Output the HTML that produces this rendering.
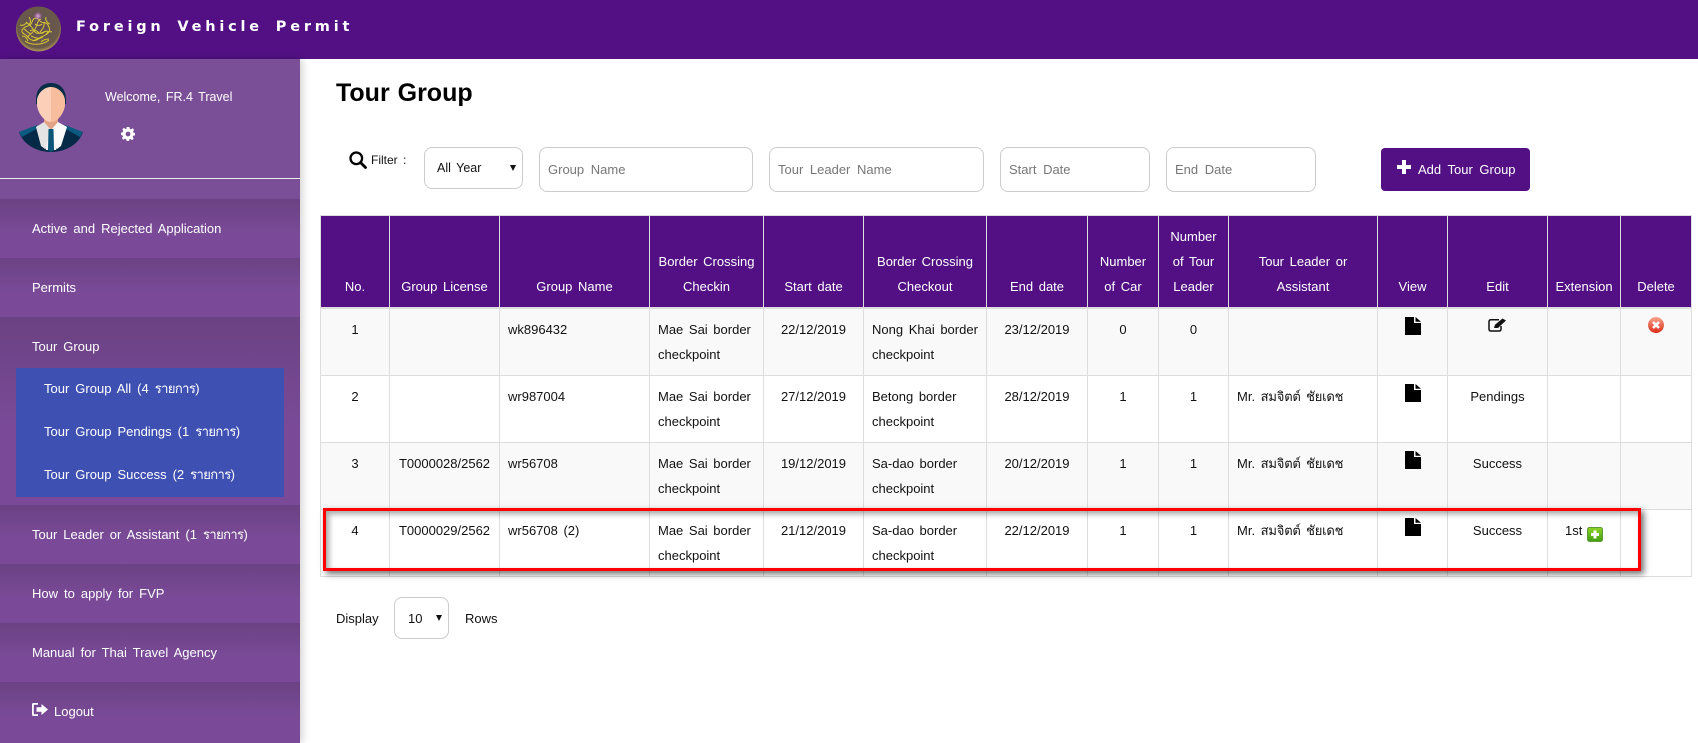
<!DOCTYPE html>
<html><head><meta charset="utf-8"><title>Foreign Vehicle Permit</title>
<style>
*{box-sizing:border-box}
html,body{margin:0;padding:0;width:1698px;height:743px;overflow:hidden;background:#fff}
body{font-family:"Liberation Sans","Noto Sans CJK SC",sans-serif;font-size:13px;word-spacing:3px;color:#111;position:relative}
.abs{position:absolute;white-space:nowrap}
.t{letter-spacing:-.6px;word-spacing:0}
.n{letter-spacing:-.2px;word-spacing:2px}
#top{position:absolute;left:0;top:0;width:1698px;height:59px;background:#521084}
#title{left:76px;top:17px;font-family:"DejaVu Sans",sans-serif;font-size:14.500px;font-weight:bold;color:#fff;letter-spacing:3.800px;line-height:20px;word-spacing:4px}
#side{position:absolute;left:0;top:59px;width:300px;height:684px;background:#7b4f98;box-shadow:2px 0 8px rgba(0,0,0,.2)}
#hr{position:absolute;left:0;top:178px;width:300px;height:1px;background:#eee}
.mi{position:absolute;left:0;width:300px;height:59px;background:linear-gradient(#6b4283,#7a4a98 60%);color:#fff;padding-left:32px;line-height:59px;font-size:13px;word-spacing:2.400px}
#sub{position:absolute;left:16px;top:368px;width:268px;height:129px;background:#3f50b3}
.si{position:absolute;left:44px;color:#fff;line-height:20px;white-space:nowrap;word-spacing:2.400px}
h1{position:absolute;left:336px;top:76px;margin:0;font-size:25px;line-height:34px;font-weight:bold;color:#000;word-spacing:1px}
.box{position:absolute;border:1px solid #ccc;border-radius:8px;background:#fff;color:#777;padding-left:8px;display:flex;align-items:center;font-size:13px}
.arr{position:absolute;width:0;height:0;border-left:3.500px solid transparent;border-right:3.500px solid transparent;border-top:6px solid #111}
#btn{position:absolute;left:1381px;top:148px;width:149px;height:43px;background:#521084;border-radius:4px;color:#fff}
table{position:absolute;left:320px;top:215px;width:1371px;height:362px;border-collapse:collapse;table-layout:fixed;word-spacing:2px}
th{background:#521084;color:#fff;font-weight:normal;border:1px solid #ddd;border-bottom:2px solid #ddd;vertical-align:bottom;padding:0 2px 8px;line-height:25px;height:92px;text-align:center;font-size:13px;white-space:nowrap}
td{border:1px solid #ddd;vertical-align:top;padding:8px;line-height:25px;height:67px;color:#111;white-space:nowrap}
td.c{text-align:center;padding-left:2px;padding-right:2px}
tr.s td{background:#f9f9f9}
#red{position:absolute;left:323px;top:508px;width:1318px;height:63px;border:3px solid #f00;box-shadow:3px 3px 6px rgba(0,0,0,.55),inset 3px 3px 6px rgba(0,0,0,.35)}
svg{position:absolute;overflow:visible}
</style></head><body>
<div id="top"></div>
<svg style="left:0;top:0" width="70" height="59" viewBox="0 0 70 59">
<defs><radialGradient id="sg" cx=".5" cy=".45" r=".55"><stop offset="0" stop-color="#5e4c58"/><stop offset=".85" stop-color="#6b5a48"/><stop offset="1" stop-color="#b39c58"/></radialGradient>
<radialGradient id="gl" cx=".5" cy=".5" r=".5"><stop offset="0" stop-color="#f0b4f0"/><stop offset="1" stop-color="#8a4a9c" stop-opacity="0"/></radialGradient></defs>
<circle cx="38.500" cy="29" r="22.500" fill="url(#sg)"/>
<g fill="none" stroke="#d9c832" stroke-width="1">
<path d="M22 30c4-6 8-2 10-8s6-4 8-1 6 0 8 4 3 6-1 9-6 2-9 5-8 1-10-2-7-3-6-7z"/>
<path d="M26 22c3 3 5 3 7 7s4 5 8 4 6-3 8-1M27 37c4-3 7-5 9-10s2-7 5-8M33 41c3-2 7-2 10-4M24 29c2 1 4 4 7 5M44 22c1 4-1 7-4 10"/>
<path d="M25 41c5 4 17 5 24-1M20 25c3 1 5 0 7-3M29 17c2 3 2 5 0 8M46 17c-1 3 1 6 4 7M52 32c-3-1-5 0-6 3M22 36c3 0 5 2 6 5M30 31c3-2 6-1 8 1s5 2 7-1M35 24c2 2 5 2 7 0M31 36c3 1 5 3 9 2M41 42c2-2 5-3 8-3"/>
</g>
<circle cx="38" cy="16" r="5" fill="url(#gl)"/>
</svg>
<div class="abs" id="title">Foreign Vehicle Permit</div>

<div id="side"></div>
<svg style="left:0;top:0" width="100" height="160" viewBox="0 0 100 160">
<path d="M19 132L40 126H62L83 132C79 144 66 152 51 152S23 144 19 132Z" fill="#042a47"/>
<path d="M19 132L37 125 38 128 22 137Z" fill="#0d5a80"/><path d="M83 132L65 125 64 128 80 137Z" fill="#0d5a80"/>
<path d="M37 126H66L56 150H46Z" fill="#f4f4f4"/>
<path d="M44 118H58V126L51 132 44 126Z" fill="#e2a386"/>
<path d="M36 127L44 122 51 130 45 149 41 146Z" fill="#e4e4e4"/><path d="M67 127L58 122 51 130 57 149 61 146Z" fill="#fafafa"/>
<path d="M48.500 129H53.500L54 150 51 152 48 150Z" fill="#0b5578"/>
<path d="M36 100C36 88 43 83 51 83S66 88 66 100V104H36Z" fill="#0a2d47"/>
<path d="M37 100C38 92 45 87 51 87V122C44 122 37 112 37 104Z" fill="#fcd0b8"/>
<path d="M65 100C64 92 57 87 51 87V122C58 122 65 112 65 104Z" fill="#f8bd9c"/>
</svg>
<div class="abs" style="left:105px;top:87px;color:#fff;line-height:20px;font-size:12.500px;word-spacing:2px">Welcome, FR.4 Travel</div>
<svg style="left:121px;top:127px" width="14" height="14" viewBox="0 0 14 14"><path fill="#fff" fill-rule="evenodd" d="M5.600 0H8.400L8.800 1.900 10 2.400 11.600 1.300 13.100 2.900 12 4.500 12.500 5.700 14 6V8.400L12.200 8.800 11.700 10 12.700 11.600 11.100 13.100 9.500 12 8.300 12.500 8 14H5.600L5.200 12.200 4 11.700 2.400 12.700 .9 11.100 2 9.500 1.500 8.300 0 8V5.600L1.800 5.200 2.300 4 1.300 2.400 2.900 .9 4.500 2 5.700 1.500ZM7 4.600A2.400 2.400 0 1 0 7 9.400 2.400 2.400 0 1 0 7 4.600Z"/></svg>
<div id="hr"></div>
<div class="mi" style="top:199px">Active and Rejected Application</div>
<div class="mi" style="top:258px">Permits</div>
<div class="mi" style="top:317px;height:188px;line-height:60px">Tour Group</div>
<div id="sub"></div>
<div class="si" style="top:379px">Tour Group All (4 <span class="t">รายการ</span>)</div>
<div class="si" style="top:422px">Tour Group Pendings (1 <span class="t">รายการ</span>)</div>
<div class="si" style="top:465px">Tour Group Success (2 <span class="t">รายการ</span>)</div>
<div class="mi" style="top:505px">Tour Leader or Assistant (1 <span class="t">รายการ</span>)</div>
<div class="mi" style="top:564px">How to apply for FVP</div>
<div class="mi" style="top:623px">Manual for Thai Travel Agency</div>
<div class="mi" style="top:682px;height:61px;padding-left:54px">Logout</div>
<svg style="left:32px;top:703px" width="16" height="13" viewBox="0 0 16 13"><path fill="#fff" d="M1.500 0H6V1.800H2.500Q1.800 1.800 1.800 2.500V10.500Q1.800 11.200 2.500 11.200H6V13H1.500Q0 13 0 11.500V1.500Q0 0 1.500 0ZM9.500 1L16 6.500 9.500 12V8.800H4.500V4.200H9.500Z"/></svg>

<h1>Tour Group</h1>
<svg style="left:349px;top:151px" width="18" height="18" viewBox="0 0 18 18"><circle cx="7.300" cy="7.300" r="5.800" fill="none" stroke="#000" stroke-width="2.300"/><path d="M11.500 11.500L16.500 16.500" stroke="#000" stroke-width="2.800" stroke-linecap="round"/></svg>
<div class="abs" style="left:371px;top:150px;line-height:20px;font-size:12px;word-spacing:2px">Filter :</div>
<div class="box" style="left:424px;top:147px;width:99px;height:42px;padding-left:12px;color:#111;word-spacing:2px;font-size:12.500px">All Year</div>
<div class="arr" style="left:510px;top:165px"></div>
<div class="box" style="left:539px;top:147px;width:214px;height:45px">Group Name</div>
<div class="box" style="left:769px;top:147px;width:215px;height:45px">Tour Leader Name</div>
<div class="box" style="left:1000px;top:147px;width:150px;height:45px">Start Date</div>
<div class="box" style="left:1166px;top:147px;width:150px;height:45px">End Date</div>
<div id="btn"></div>
<svg style="left:1397px;top:160px" width="14" height="14" viewBox="0 0 14 14"><path fill="#fff" d="M5 0H9V5H14V9H9V14H5V9H0V5H5Z"/></svg>
<div class="abs" style="left:1418px;top:160px;line-height:20px;color:#fff">Add Tour Group</div>

<table>
<colgroup><col style="width:69px"><col style="width:110px"><col style="width:150px"><col style="width:114px"><col style="width:100px"><col style="width:123px"><col style="width:101px"><col style="width:71px"><col style="width:70px"><col style="width:149px"><col style="width:70px"><col style="width:100px"><col style="width:73px"><col style="width:71px"></colgroup>
<tr><th>No.</th><th>Group License</th><th>Group Name</th><th>Border Crossing<br>Checkin</th><th>Start date</th><th>Border Crossing<br>Checkout</th><th>End date</th><th>Number<br>of Car</th><th>Number<br>of Tour<br>Leader</th><th>Tour Leader or<br>Assistant</th><th>View</th><th>Edit</th><th>Extension</th><th>Delete</th></tr>
<tr class="s"><td class="c">1</td><td class="c"></td><td>wk896432</td><td>Mae Sai border<br>checkpoint</td><td class="c">22/12/2019</td><td>Nong Khai border<br>checkpoint</td><td class="c">23/12/2019</td><td class="c">0</td><td class="c">0</td><td></td><td></td><td></td><td></td><td></td></tr>
<tr><td class="c">2</td><td class="c"></td><td>wr987004</td><td>Mae Sai border<br>checkpoint</td><td class="c">27/12/2019</td><td>Betong border<br>checkpoint</td><td class="c">28/12/2019</td><td class="c">1</td><td class="c">1</td><td>Mr. <span class="n">สมจิตต์ ชัยเดช</span></td><td></td><td class="c">Pendings</td><td></td><td></td></tr>
<tr class="s"><td class="c">3</td><td class="c">T0000028/2562</td><td>wr56708</td><td>Mae Sai border<br>checkpoint</td><td class="c">19/12/2019</td><td>Sa-dao border<br>checkpoint</td><td class="c">20/12/2019</td><td class="c">1</td><td class="c">1</td><td>Mr. <span class="n">สมจิตต์ ชัยเดช</span></td><td></td><td class="c">Success</td><td></td><td></td></tr>
<tr><td class="c">4</td><td class="c">T0000029/2562</td><td>wr56708 (2)</td><td>Mae Sai border<br>checkpoint</td><td class="c">21/12/2019</td><td>Sa-dao border<br>checkpoint</td><td class="c">22/12/2019</td><td class="c">1</td><td class="c">1</td><td>Mr. <span class="n">สมจิตต์ ชัยเดช</span></td><td></td><td class="c">Success</td><td style="padding-left:17px">1st</td><td></td></tr>
</table>

<svg style="left:1405px;top:317px" width="16" height="18" viewBox="0 0 16 18"><path d="M0 0H9V6H16V18H0ZM10.500 0L16 4.800H10.500Z"/></svg>
<svg style="left:1405px;top:384px" width="16" height="18" viewBox="0 0 16 18"><path d="M0 0H9V6H16V18H0ZM10.500 0L16 4.800H10.500Z"/></svg>
<svg style="left:1405px;top:451px" width="16" height="18" viewBox="0 0 16 18"><path d="M0 0H9V6H16V18H0ZM10.500 0L16 4.800H10.500Z"/></svg>
<svg style="left:1405px;top:518px" width="16" height="18" viewBox="0 0 16 18"><path d="M0 0H9V6H16V18H0ZM10.500 0L16 4.800H10.500Z"/></svg>
<svg style="left:1488px;top:318px" width="19" height="14" viewBox="0 0 19 14"><path d="M11 1.800H3Q1 1.800 1 3.800V11Q1 13 3 13H11Q13 13 13 11V8" fill="none" stroke="#111" stroke-width="1.500"/><path d="M6 10L7 6.800 14.500 .5 18 2.500 10 10Z" fill="#111"/></svg>
<svg style="left:1648px;top:317px" width="16" height="16" viewBox="0 0 16 16"><defs><linearGradient id="rd" x1="0" y1="0" x2="0" y2="1"><stop offset="0" stop-color="#f8a58f"/><stop offset="1" stop-color="#dc2b17"/></linearGradient><linearGradient id="gr" x1="0" y1="0" x2="0" y2="1"><stop offset="0" stop-color="#8fd428"/><stop offset="1" stop-color="#3f9e12"/></linearGradient></defs><circle cx="8" cy="8" r="8" fill="url(#rd)"/><path d="M5 5L11 11M11 5L5 11" stroke="#fff" stroke-width="2.600"/></svg>

<div id="red"></div>
<svg style="left:1587px;top:527px" width="16" height="15" viewBox="0 0 16 15"><rect x=".5" y=".5" width="15" height="14" rx="2" fill="url(#gr)" stroke="#5e9a3a"/><path d="M6.500 3.500H9.500V6H12V9H9.500V11.500H6.500V9H4V6H6.500Z" fill="#fff"/></svg>

<div class="abs" style="left:336px;top:609px;line-height:20px">Display</div>
<div class="box" style="left:394px;top:597px;width:55px;height:42px;padding-left:13px;color:#111">10</div>
<div class="arr" style="left:436px;top:615px"></div>
<div class="abs" style="left:465px;top:609px;line-height:20px">Rows</div>
</body></html>
